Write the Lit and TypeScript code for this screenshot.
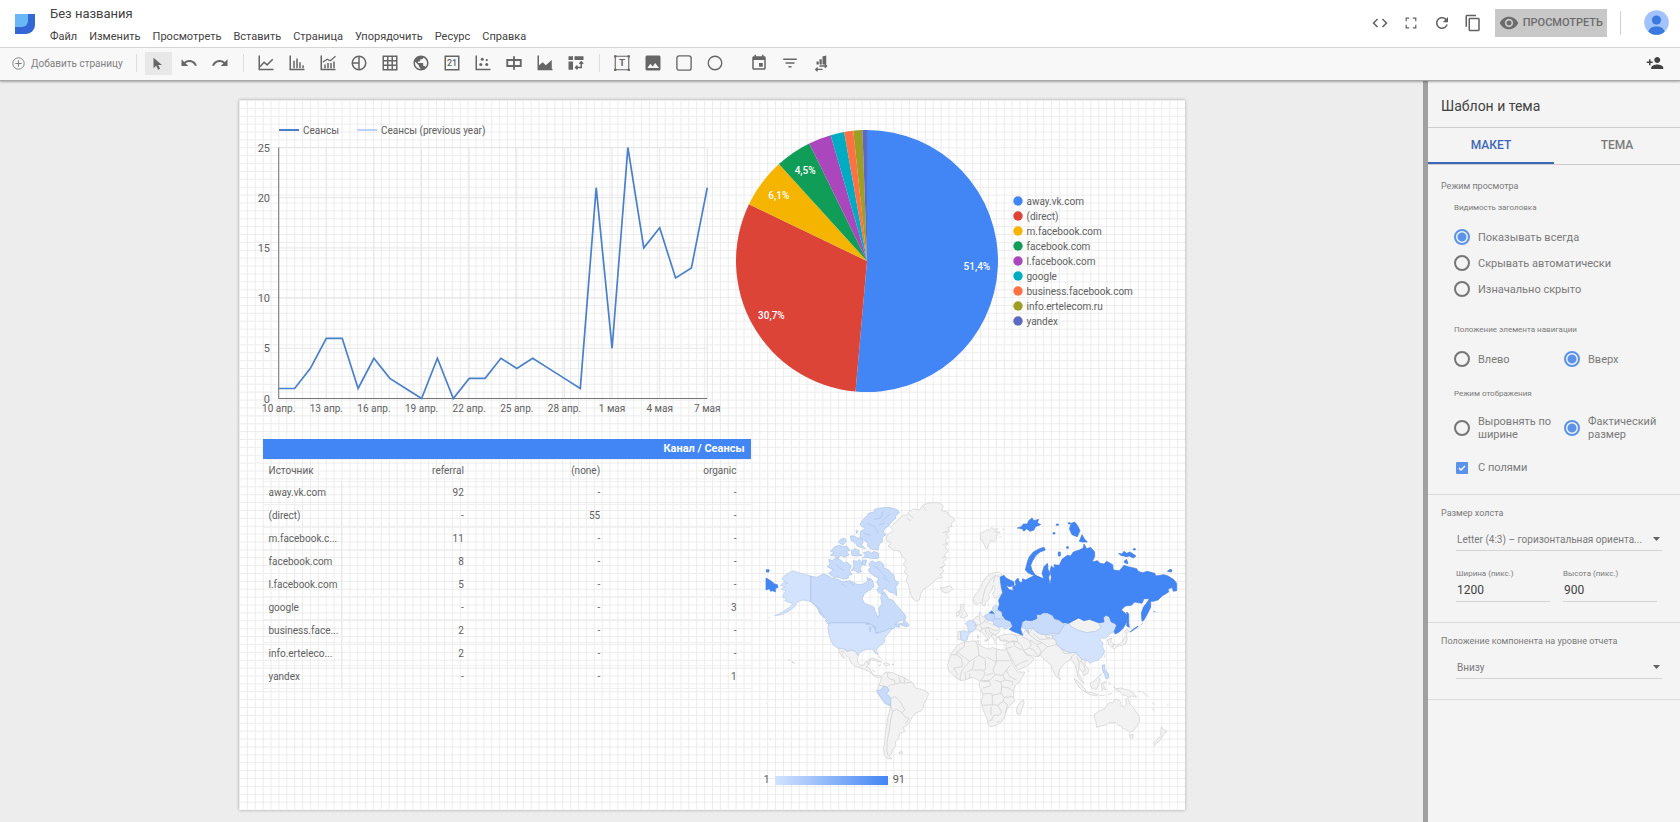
import { LitElement, html, svg, css } from "lit";
import { customElement, state } from "lit/decorators.js";
import { classMap } from "lit/directives/class-map.js";

/* ---------- data ---------- */

const SESSIONS = [1, 1, 3, 6, 6, 1, 4, 2, 1, 0, 4, 0, 2, 2, 4, 3, 4, 3, 2, 1, 21, 5, 25, 15, 17, 12, 13, 21];
const DAYS = ["10 апр.", "13 апр.", "16 апр.", "19 апр.", "22 апр.", "25 апр.", "28 апр.", "1 мая", "4 мая", "7 мая"];

const SOURCES = [
  { name: "away.vk.com", value: 92, color: "#4285f4" },
  { name: "(direct)", value: 55, color: "#db4437" },
  { name: "m.facebook.com", value: 11, color: "#f4b400" },
  { name: "facebook.com", value: 8, color: "#0f9d58" },
  { name: "l.facebook.com", value: 5, color: "#ab47bc" },
  { name: "google", value: 3, color: "#00acc1" },
  { name: "business.facebook.com", value: 2, color: "#ff7043" },
  { name: "info.ertelecom.ru", value: 2, color: "#9e9d24" },
  { name: "yandex", value: 1, color: "#5c6bc0" },
];

const ROWS = [
  ["away.vk.com", "92", "-", "-"],
  ["(direct)", "-", "55", "-"],
  ["m.facebook.c...", "11", "-", "-"],
  ["facebook.com", "8", "-", "-"],
  ["l.facebook.com", "5", "-", "-"],
  ["google", "-", "-", "3"],
  ["business.face...", "2", "-", "-"],
  ["info.erteleco...", "2", "-", "-"],
  ["yandex", "-", "-", "1"],
];

const MENU = ["Файл", "Изменить", "Просмотреть", "Вставить", "Страница", "Упорядочить", "Ресурс", "Справка"];

/* ---------- icons, all on a 24 unit box ---------- */

const solid = (d: string) => svg`<path fill="currentColor" d=${d} />`;
const line = (d: string) => svg`<path fill="none" stroke="currentColor" stroke-width="2" d=${d} />`;

const ICONS: Record<string, unknown> = {
  code: solid("M9.4 16.6L4.8 12l4.6-4.6L8 6l-6 6 6 6 1.4-1.4zm5.2 0l4.6-4.6-4.6-4.6L16 6l6 6-6 6-1.4-1.4z"),
  fullscreen: solid("M5 15H3v6h6v-2H5v-4zM3 9h2V5h4V3H3v6zm16 10h-4v2h6v-6h-2v4zM15 3v2h4v4h2V3h-6z"),
  refresh: solid("M17.65 6.35C16.2 4.9 14.21 4 12 4c-4.42 0-7.99 3.58-7.99 8s3.57 8 7.99 8c3.73 0 6.84-2.55 7.73-6h-2.08c-.82 2.33-3.04 4-5.65 4-3.31 0-6-2.69-6-6s2.69-6 6-6c1.66 0 3.14.69 4.22 1.78L13 11h7V4l-2.35 2.35z"),
  copy: solid("M16 1H4c-1.1 0-2 .9-2 2v14h2V3h12V1zm3 4H8c-1.1 0-2 .9-2 2v14c0 1.1.9 2 2 2h11c1.1 0 2-.9 2-2V7c0-1.1-.9-2-2-2zm0 16H8V7h11v14z"),
  eye: solid("M12 4.5C7 4.5 2.73 7.61 1 12c1.73 4.39 6 7.5 11 7.5s9.27-3.11 11-7.5c-1.73-4.39-6-7.5-11-7.5zM12 17c-2.76 0-5-2.24-5-5s2.24-5 5-5 5 2.24 5 5-2.24 5-5 5zm0-8c-1.66 0-3 1.34-3 3s1.34 3 3 3 3-1.34 3-3-1.34-3-3-3z"),
  share: solid("M15 12c2.21 0 4-1.79 4-4s-1.79-4-4-4-4 1.79-4 4 1.79 4 4 4zm-9-2V7H4v3H1v2h3v3h2v-3h3v-2H6zm9 4c-2.67 0-8 1.34-8 4v2h16v-2c0-2.66-5.33-4-8-4z"),
  undo: solid("M12.5 8c-2.65 0-5.05.99-6.9 2.6L2 7v9h9l-3.62-3.62c1.39-1.16 3.16-1.88 5.12-1.88 3.54 0 6.55 2.31 7.6 5.5l2.37-.78C21.08 11.03 17.15 8 12.5 8z"),
  redo: solid("M18.4 10.6C16.55 8.99 14.15 8 11.5 8c-4.65 0-8.58 3.03-9.96 7.22L3.9 16c1.05-3.19 4.05-5.5 7.6-5.5 1.95 0 3.73.72 5.12 1.88L13 16h9V7l-3.6 3.6z"),
  cursor: solid("M6 5v14l3.6-3.2 2.5 5.2 2.6-1.2-2.4-5h5z"),
  add: svg`<circle cx="12" cy="12" r="10.5" fill="none" stroke="currentColor" stroke-width="1.8" />${line("M12 6v12M6 12h12")}`,
  lineChart: line("M3 2v18.5h19M4 17l5.5-6 4 3.5L21 7"),
  barChart: svg`${line("M3 2v18.5h19")}${line("M8 9v10M12 6v13M16 11v8M20 15v4")}`,
  comboChart: svg`${line("M3 2v18.5h19")}${line("M8 14v5M12 12v7M16 12v7M20 10v9")}<path fill="none" stroke="currentColor" stroke-width="1.5" d="M5 11l6-4 4 2 7-6" />`,
  pie: svg`<circle cx="12" cy="12" r="9" fill="none" stroke="currentColor" stroke-width="2" />${line("M12 3v18M3 12h9")}`,
  table: line("M3 3h18v18H3zM3 9h18M3 15h18M9 3v18M15 3v18"),
  globe: solid("M12 2C6.48 2 2 6.48 2 12s4.48 10 10 10 10-4.48 10-10S17.52 2 12 2zm-1 17.93c-3.95-.49-7-3.85-7-7.93 0-.62.08-1.21.21-1.79L9 15v1c0 1.1.9 2 2 2v1.93zm6.9-2.54c-.26-.81-1-1.39-1.9-1.39h-1v-3c0-.55-.45-1-1-1H8v-2h2c.55 0 1-.45 1-1V7h2c1.1 0 2-.9 2-2v-.41c2.93 1.19 5 4.06 5 7.41 0 2.08-.8 3.97-2.1 5.39z"),
  score: svg`${line("M3 3h18v18H3z")}<text x="12" y="16.5" font-size="12" font-weight="500" text-anchor="middle" fill="currentColor">21</text>`,
  scatter: svg`${line("M3 2v18.5h19")}<circle cx="9" cy="14" r="2" fill="currentColor" /><circle cx="11" cy="7" r="2" fill="currentColor" /><circle cx="17" cy="14" r="2" fill="currentColor" /><circle cx="17" cy="8" r="1.5" fill="currentColor" />`,
  bullet: svg`<path fill="none" stroke="currentColor" stroke-width="2.5" d="M3 8h18v8H3zM12 3v18" />`,
  area: svg`${line("M3 2v18.5h19")}${solid("M4 20v-5l5-4 4 4 8-7v12z")}`,
  pivot: svg`${solid("M2 3h6v5H2zM10 3h12v5H10zM2 10h6v11H2z")}${line("M19 11v7h-7M16.5 13l2.5-2.5 2.5 2.5M14 15.5L11.5 18l2.5 2.5")}`,
  text: svg`<path fill="none" stroke="currentColor" stroke-width="1.5" d="M3 3h18v18H3z" />${solid("M1.5 1.5h3v3h-3zM19.5 1.5h3v3h-3zM1.5 19.5h3v3h-3zM19.5 19.5h3v3h-3z")}<text x="12" y="16.5" font-size="13" font-weight="700" text-anchor="middle" fill="currentColor">T</text>`,
  image: solid("M22 20V4c0-1.1-.9-2-2-2H4c-1.1 0-2 .9-2 2v16c0 1.1.9 2 2 2h16c1.1 0 2-.9 2-2zM8.5 13l3 3.5L15 12l5 6.5H4.5z"),
  rect: svg`<rect x="2.5" y="2.5" width="19" height="19" rx="3" fill="none" stroke="currentColor" stroke-width="1.8" />`,
  circle: svg`<circle cx="12" cy="12" r="9" fill="none" stroke="currentColor" stroke-width="1.8" />`,
  date: solid("M17 12h-5v5h5v-5zM16 1v2H8V1H6v2H5c-1.11 0-1.99.9-1.99 2L3 19c0 1.1.89 2 2 2h14c1.1 0 2-.9 2-2V5c0-1.1-.9-2-2-2h-1V1h-2zm3 18H5V8h14v11z"),
  filter: solid("M10 18h4v-2h-4v2zM3 6v2h18V6H3zm3 7h12v-2H6v2z"),
  dataControl: svg`${solid("M6 10h3v4H6zM10 7h3v7h-3zM14 3h1l4-1v12h-5z")}<path fill="none" stroke="currentColor" stroke-width="1.8" d="M10 16h9M17 13.5l2.5 2.5-2.5 2.5M14 20.5H5M7.5 18L5 20.5 7.5 23" />`,
};

const icon = (name: string) => html`<svg class="icon" viewBox="0 0 24 24" aria-hidden="true">${ICONS[name]}</svg>`;

const TOOLS: { name: string; label: string }[][] = [
  [
    { name: "cursor", label: "Выбрать" },
    { name: "undo", label: "Отменить" },
    { name: "redo", label: "Повторить" },
  ],
  [
    { name: "lineChart", label: "Временной ряд" },
    { name: "barChart", label: "Гистограмма" },
    { name: "comboChart", label: "Комбинированная диаграмма" },
    { name: "pie", label: "Круговая диаграмма" },
    { name: "table", label: "Таблица" },
    { name: "globe", label: "Географическая карта" },
    { name: "score", label: "Сводка" },
    { name: "scatter", label: "Точечная диаграмма" },
    { name: "bullet", label: "Маркированная диаграмма" },
    { name: "area", label: "Диаграмма с областями" },
    { name: "pivot", label: "Сводная таблица" },
  ],
  [
    { name: "text", label: "Текст" },
    { name: "image", label: "Изображение" },
    { name: "rect", label: "Прямоугольник" },
    { name: "circle", label: "Круг" },
  ],
  [
    { name: "date", label: "Диапазон дат" },
    { name: "filter", label: "Фильтр" },
    { name: "dataControl", label: "Управление данными" },
  ],
];

/* ---------- time series ---------- */

@customElement("line-chart")
class LineChart extends LitElement {
  static styles = css`
    :host { display: block; }
    .chart { display: block; width: 100%; height: auto; font-family: Roboto, sans-serif; }
    .axis { font-size: 10px; fill: #616161; }
    .value { font-size: 11px; fill: #616161; text-anchor: end; }
    .grid { stroke: #e6e6e6; stroke-width: 1; }
    .base { stroke: #757575; stroke-width: 1; }
    .series { fill: none; stroke: #4a80cb; stroke-width: 1.7; }
  `;

  render() {
    const left = 39.7, right = 468.3, top = 47.5, bottom = 298.5;
    const x = (i: number) => left + ((right - left) * i) / (SESSIONS.length - 1);
    const y = (v: number) => bottom - ((bottom - top) * v) / 25;
    const d = "M" + SESSIONS.map((v, i) => `${x(i).toFixed(1)},${y(v).toFixed(1)}`).join("L");
    return html`
      <svg class="chart" viewBox="0 0 488 328" role="img" aria-label="Сеансы по дням">
        <path d="M40 30h20" stroke="#4a80cb" stroke-width="2" />
        <text class="axis" x="64" y="34">Сеансы</text>
        <path d="M118 30h20" stroke="#b9d3f6" stroke-width="2" />
        <text class="axis" x="142" y="34">Сеансы (previous year)</text>
        ${[0, 5, 10, 15, 20, 25].map((v) => svg`
          <path class="grid" d="M${left} ${y(v)}H${right}" />
          <text class="value" x="31" y=${y(v) + 4}>${v}</text>`)}
        ${DAYS.map((day, i) => svg`
          <path class="grid" d="M${x(i * 3)} ${top}V${bottom}" />
          <text class="axis" text-anchor="middle" x=${x(i * 3)} y="312">${day}</text>`)}
        <path class="base" fill="none" d="M${left} ${top}V${bottom}H${right}" />
        <path class="series" d=${d} />
      </svg>`;
  }
}

/* ---------- pie ---------- */

@customElement("pie-chart")
class PieChart extends LitElement {
  static styles = css`
    :host { display: flex; align-items: center; gap: 14px; font-family: Roboto, sans-serif; }
    .pie { display: block; width: 264px; height: 264px; flex: none; }
    .share { font-size: 10px; font-weight: 500; fill: #fff; text-anchor: middle; }
    .legend { list-style: none; margin: 0; padding: 0; font-size: 10px; line-height: 15px; color: #616161; }
    .entry { display: flex; align-items: center; gap: 4px; white-space: nowrap; }
    .dot { width: 10px; height: 10px; }
  `;

  render() {
    const total = SOURCES.reduce((sum, s) => sum + s.value, 0);
    const point = (share: number, r: number) => {
      const a = share * 2 * Math.PI;
      return [132 + r * Math.sin(a), 132 - r * Math.cos(a)];
    };
    let start = 0;
    const slices = SOURCES.map((s) => {
      const share = s.value / total;
      const end = start + share;
      const [x1, y1] = point(start, 131);
      const [x2, y2] = point(end, 131);
      const [tx, ty] = point(start + share / 2, 110);
      start = end;
      const d = `M132 132L${x1} ${y1}A131 131 0 ${share > 0.5 ? 1 : 0} 1 ${x2} ${y2}Z`;
      const label = (share * 100).toFixed(1).replace(".", ",") + "%";
      return svg`<path d=${d} fill=${s.color} />
        ${share > 0.04 ? svg`<text class="share" x=${tx} y=${ty + 4}>${label}</text>` : ""}`;
    });
    return html`
      <svg class="pie" viewBox="0 0 264 264" role="img" aria-label="Сеансы по источникам">${slices}</svg>
      <ul class="legend">
        ${SOURCES.map((s) => html`<li class="entry">
          <svg class="dot" viewBox="0 0 10 10"><circle cx="5" cy="5" r="4.7" fill=${s.color} /></svg>${s.name}</li>`)}
      </ul>`;
  }
}

/* ---------- world map ---------- */

const AMERICA = {
  none: [
    "M412,134L430,122 422,112 438,96 450,84 460,74 470,76 476,66 492,56 508,60 520,44 544,38 566,38 580,48 574,62 592,66 598,78 610,82 614,92 604,100 606,110 594,112 598,124 588,132 596,142 586,150 594,162 586,172 594,184 584,194 590,206 580,216 586,226 574,232 582,244 570,252 578,262 560,266 548,278 534,290 520,298 512,312 508,330 498,334 488,326 480,306 476,288 468,272 474,256 462,246 470,234 460,222 468,210 456,198 450,184 430,180 414,168 424,160 408,150Z",
    "M572,292L582,294 590,290 602,288 608,296 600,304 588,310 576,304Z",
    "M264,474L280,476 292,484 304,480 316,484 324,498 322,512 330,526 340,526 348,514 360,512 356,524 348,530 358,534 362,540 366,550 374,556 386,556 394,560 388,562 378,562 368,554 360,546 346,540 334,534 318,530 304,520 298,506 288,496 280,484 274,484 284,506 276,500 268,486Z",
    "M356,508L370,504 386,512 396,517 382,514 366,510Z",
    "M400,520L412,519 420,524 408,528Z M386,526L392,525 390,528Z M426,522L432,523 428,525Z M384,498L390,502 396,508",
    "M394,560L402,550 414,546 428,548 444,556 462,562 478,572 490,580 496,594 514,598 530,604 536,612 528,630 522,640 520,654 512,664 498,668 488,680 480,694 470,706 460,712 464,724 448,732 446,746 436,756 438,768 428,778 424,792 416,798 426,806 412,806 404,796 400,776 404,756 406,730 410,706 414,680 420,656 422,648 404,640 392,622 380,606 384,592 388,582 392,572Z",
    "M446,788L456,784 458,790 450,792Z M114,508L122,512 M126,514L134,520 128,518Z M56,384L60,382 M46,642L50,640 M74,632h2 M60,748h3 M346,586h3",
  ],
  usa: [
    "M182,258L160,252 145,248 130,242 118,248 105,256 95,266 103,273 114,280 100,277 92,286 106,290 94,297 108,303 100,312 98,322 110,325 104,332 118,338 130,340 122,350 106,360 88,372 74,377 94,374 116,364 134,350 140,338 150,332 160,330 175,333 186,336 198,346 206,356 216,370 226,382 222,384 210,370 200,352 182,334Z",
    "M238,398L346,398 358,402 370,404 378,414 384,428 400,422 418,414 430,412 422,422 412,434 402,444 404,456 394,464 384,472 378,480 384,494 376,490 368,478 352,478 338,482 328,488 326,497 316,484 304,480 292,484 280,476 264,474 250,466 242,450 236,430 234,412Z",
  ],
  canada: [
    "M182,258L200,262 220,252 232,256 245,264 262,268 280,276 300,272 318,282 335,284 350,276 360,264 368,272 372,290 356,302 344,310 336,326 344,340 358,346 372,352 376,366 384,384 388,372 386,354 396,342 392,322 398,308 408,312 414,326 428,330 438,344 446,352 456,364 468,378 466,388 450,392 434,404 452,400 448,412 436,410 430,416 418,416 400,424 380,430 376,424 374,412 360,402 346,398 238,398 228,388 218,374 208,358 196,344 182,334Z",
    "M236,208L246,212 256,204 272,210 282,220 290,216 304,228 298,240 306,254 294,256 296,264 280,268 266,262 252,262 236,250 250,240 232,230 240,222Z",
    "M356,222L366,212 376,218 388,214 400,222 402,234 416,240 424,250 432,256 434,268 446,280 438,290 440,318 430,308 418,306 408,294 396,300 404,308 392,312 380,300 388,290 380,278 386,264 372,258 362,250 354,240 362,232Z",
    "M336,92L352,76 356,70 372,66 374,58 390,54 416,52 440,58 448,68 438,76 436,86 424,96 416,108 404,116 400,126 408,134 396,142 398,154 388,162 384,180 366,178 352,168 354,160 344,152 330,142 332,124 346,116 330,104Z",
    "M340,188L356,184 364,190 372,184 386,190 386,204 370,206 350,202 338,204 346,196Z",
    "M300,138L314,138 322,144 334,144 340,156 334,164 346,176 332,172 322,168 316,158 304,152Z M266,156L272,148 284,144 288,154 280,164 272,162Z M318,120L324,124 320,130Z",
    "M242,184L254,170 268,166 280,170 290,168 300,182 288,184 298,194 284,202 272,196 264,206 254,198 242,196 252,188Z",
    "M304,182L316,176 328,182 326,190 336,196 322,198 306,196Z M310,212L322,214 328,208 338,222 330,234 334,246 322,248 314,240 304,242 312,228Z M338,210L350,210 346,226 336,222Z M352,262L360,272 352,270Z",
    "M452,402L460,400 462,390 470,398 474,400 476,408 468,410 456,406Z M206,364L214,376 M226,390L238,402 234,402Z",
  ],
  peru: ["M380,602L392,600 402,588 412,592 418,602 408,612 418,618 422,626 422,648 404,638 392,622Z"],
  russia: ["M48,264L62,272 74,282 82,284 84,292 76,296 76,306 68,302 62,304 58,296 48,300Z M49,239h8v7h-8Z"],
  water: "M346,402L354,404 360,400 350,399Z M358,410L360,426 364,412Z M368,408L376,418 378,412Z M374,430L386,425 M300,276L312,286 M276,282L288,290 M400,62L392,84 372,88 M420,72L400,90 M352,100L374,110 384,130 M404,100L388,104 M340,130L362,136 M380,232L396,248 408,262 M400,262L420,276 M372,226L384,238 M258,222L270,236 282,240",
  border:
    "M388,586L402,588M414,548L412,560 422,568 432,570 436,582 418,586 412,592M436,582L452,578 446,560M452,578L466,580 484,576M462,562L464,578M422,626L436,620 448,632 456,644 464,660 456,668 440,658 428,664 422,648M456,668L464,680 478,686 466,700M428,664L422,690 418,720 412,750 410,780 414,798M350,516L358,524M366,540L376,546M476,72L490,84 M520,50L528,62 M470,84L482,92 M592,124L578,128 M592,160L580,164 M586,200L574,204 M582,230L568,234",
};

const EURASIA = {
  none: [
    "M60,130L74,124 80,118 86,122 96,112 100,118 114,116 104,126 120,126 108,136 110,148 100,156 92,150 86,164 80,178 74,168 68,152 62,150Z M116,142L124,140 M126,118h8 M86,206h3",
    "M40,330L44,316 54,304 62,292 68,276 78,262 90,252 104,248 118,246 126,254 122,264 122,290 128,308 118,320 104,324 98,312 106,298 100,286 94,302 86,314 88,326 78,334 74,348 68,346 62,336 50,344 42,340Z",
    "M326,400L340,392 356,384 372,392 388,388 404,394 416,398 424,412 408,424 380,428 356,422 336,412Z",
    "M116,438L132,434 150,432 172,436 186,436 196,420 206,432 218,414 230,426 256,434 280,436 286,448 290,464 280,470 262,470 256,482 244,490 236,500 218,498 204,494 190,482 184,466 172,456 160,452 148,456 136,450 122,452Z",
    "M138,460L160,454 172,456 184,466 192,484 200,496 212,498 222,506 212,520 196,530 174,540 166,528 158,510 148,492 138,476Z",
    "M240,494L252,480 262,470 280,466 290,464 304,476 318,484 334,488 350,486 346,498 334,502 330,510 318,516 306,530 298,540 294,564 286,556 278,540 270,522 262,516 254,508 246,502Z M298,562L302,568 298,570Z",
    "M334,500L346,490 356,498 366,508 380,512 374,522 386,538 384,550 372,556 366,544 358,534 354,548 362,562 372,580 364,576 354,562 350,540 344,522 336,512Z",
    "M342,566L354,574 366,588 378,600 376,606 366,600 356,590Z M376,606L396,608 414,614 410,618 390,614Z M390,580L402,574 412,562 422,568 416,582 410,598 396,596Z M424,580L438,574 430,584 438,600 430,596 426,602Z M418,616L436,616 M444,614L456,610 M446,574L450,584 M420,556L428,548",
    "M460,590L470,596 482,594 504,600 520,608 530,622 516,618 506,622 496,616 486,614 482,606 468,600Z M534,602L542,606 M546,606L558,614 566,620 M576,638L584,644 M576,656L582,660 M620,646L626,642",
    "M456,472L462,464 478,462 488,454 494,440 500,434 502,450 496,462 486,466 474,468 462,478Z M494,426L500,418 508,424 498,432Z M442,450L456,444 452,454 462,462 456,470 448,466Z M436,492L432,504",
    "M404,672L420,662 434,656 440,646 450,636 458,640 464,628 476,630 482,636 480,644 492,652 498,644 498,628 504,624 510,642 520,652 530,668 538,680 538,694 530,710 520,722 508,726 498,718 488,716 484,708 474,706 466,698 450,698 434,706 422,708 410,712 408,696 402,684Z M508,734L520,734 518,744 512,746Z",
    "M604,710L610,720 620,722 612,734 604,742 602,730Z M598,740L604,746 592,758 584,766 582,758 590,750Z M578,782h2 M556,804h2",
    "M202,542L208,544 M212,654L216,656",
  ],
  light: [
    "M304,420L314,404 326,400 336,412 356,422 380,428 408,424 424,412 416,400 430,394 430,380 438,374 448,380 454,396 470,404 466,422 450,432 440,442 430,446 424,442 420,450 430,460 426,468 434,484 426,500 414,510 396,516 390,520 382,512 366,508 356,498 350,486 334,488 318,484 304,476 290,464 290,454 278,444 276,436 292,434Z",
    "M102,372L112,360 124,364 130,378 120,386 104,384Z",
    "M98,352L108,344 116,352 116,360 104,364 98,360Z",
  ],
  mid: [
    "M186,398L196,390 214,392 230,386 230,372 250,368 262,368 278,376 288,390 304,394 314,404 306,414 298,430 272,432 256,434 242,432 230,426 218,414 206,418 206,430 198,418 186,412Z",
    "M74,376L88,370 102,372 104,386 98,394 80,390Z",
    "M98,394L104,386 120,386 136,386 152,394 156,406 144,412 136,418 128,410 116,412 102,404Z",
    "M426,526L434,524 434,538 446,552 446,564 438,566 434,554 428,542Z M424,552L418,560",
  ],
  russia: [
    "M120,262L132,256 138,264 150,270 162,276 162,286 150,290 138,286 146,298 160,302 158,290 168,286 166,272 174,264 178,276 186,278 188,266 196,270 212,262 226,256 246,264 252,266 246,250 252,230 262,220 264,238 270,250 266,262 270,284 274,262 270,242 274,228 284,236 282,224 298,226 306,208 322,196 332,198 340,186 358,180 370,174 372,162 380,176 392,172 404,186 404,200 396,216 412,212 420,220 432,222 440,214 448,218 458,224 460,240 478,242 492,226 504,230 512,232 530,236 534,244 548,248 562,244 584,250 588,258 612,254 624,258 640,268 650,280 650,302 640,304 636,292 624,298 626,306 606,318 594,330 580,334 572,334 572,352 562,372 552,390 546,394 544,370 550,352 562,336 568,326 552,326 546,340 524,336 514,346 496,348 484,360 496,370 504,380 500,396 490,414 478,426 466,432 462,426 470,406 464,400 454,396 448,380 438,376 430,382 432,396 416,398 404,394 388,388 372,392 356,384 340,392 326,400 308,398 298,390 284,386 278,376 262,368 250,368 240,374 230,372 230,386 214,392 196,390 186,396 184,408 182,418 188,436 174,430 158,424 148,418 158,408 152,394 136,388 128,378 126,366 114,358 118,344 116,330 128,308 124,290Z",
    "M196,240L202,216 208,200 220,186 238,176 252,172 256,180 240,186 228,196 218,212 212,226 216,240 226,256 240,264 220,256 204,248Z",
    "M172,114L184,110 190,102 202,102 206,92 216,84 222,92 236,88 232,98 242,104 226,110 222,120 210,124 200,116 192,124 186,116Z",
    "M328,116L334,100 344,96 352,106 360,122 352,140 336,134Z M358,154L366,134 374,148 382,156 366,156Z M325,98h6v4h-6Z M289,102h6v4h-6Z M279,128h6v4h-6Z M295,186h6v12h-6Z M320,170h5v5h-5Z",
    "M476,190L486,192 492,184 500,190 510,186 528,198 520,204 508,198 500,200 482,196Z M492,214L500,208 504,222 494,218Z M520,176h6v4h-6Z M622,244L630,238 636,240 634,246Z",
    "M500,366L506,372 506,398 508,412 500,408 502,388Z M510,426L522,416 534,408 532,412 520,420Z M544,404L548,400 M580,364L586,366",
    "M88,369L95,362 102,370Z M262,222L264,230",
  ],
  border:
    "M190,482L208,474 214,462 206,450 186,440M160,454L166,470 186,480M208,474L222,480 236,500M236,500L244,484 230,464 210,450M230,464L246,458 262,470M218,430L240,448 256,448 270,440M206,432L228,450 246,458M256,434L262,446 284,446M166,436L172,444 172,456M166,528L184,518 204,510M138,476L158,470M304,476L312,490 332,490M350,500L358,520 356,534M358,512L370,520 376,540 366,546M366,508L362,516M66,338L74,300 90,272 106,256M100,276L106,256 118,260",
};

const EUROPE_AFRICA = {
  none: [
    "M76,134L86,132 84,144 92,156 98,168 86,174 74,172 82,162 76,150Z M66,156L74,152 74,164 64,170Z",
    "M70,214L78,214 76,240 68,238Z",
    "M112,180L124,170 132,168 134,156 140,168 150,170 150,184 164,190 176,194 188,200 196,210 190,220 178,224 188,232 180,244 174,236 168,228 158,218 150,212 156,224 164,234 158,240 154,232 140,216 130,212 122,208 124,196 118,184Z M128,224L132,232 128,236Z M148,240L158,240 154,246Z M176,248L186,250",
    "M190,232L206,226 224,224 246,228 250,240 236,244 226,246 206,244 196,242Z",
    "M74,252L88,246 104,244 132,242 130,254 146,262 162,268 172,262 188,268 206,270 216,268 220,282 230,306 238,322 248,336 270,336 264,348 254,364 240,378 236,392 236,412 238,424 226,434 216,448 212,460 208,474 196,488 184,496 166,500 160,494 156,476 148,458 142,440 138,424 144,408 140,394 132,380 134,364 126,358 112,352 96,358 80,362 66,356 52,344 40,330 38,314 44,296 48,280 60,266 66,256Z",
    "M264,418L268,428 262,444 256,462 246,462 244,450 250,434Z M4,236l6,4M70,34h2M78,94h2",
  ],
  light: ["M92,190L104,180 118,186 124,198 118,212 110,216 100,214 98,200Z", "M76,216L84,212 106,218 98,228 98,238 88,244 78,240Z"],
  border:
    "M66,276L88,260 88,246M48,284H64L66,272M62,284L80,294 82,320 56,324M66,276L104,304 92,318 82,330M104,304L132,286 128,256 122,244M132,286L150,296 152,324 146,336M184,268V306L152,290M184,302H224M184,306L174,330 180,344 204,346 214,330 226,316M118,300L112,328 96,336M112,330L146,330M150,336L146,350 136,362M174,340L152,346M180,344L166,360 140,364M204,346L210,360 198,366 180,360M214,330L224,350 244,360M198,366L200,380 198,400 172,406 168,400 144,402M200,380L220,384 236,394M210,360L232,364 232,376M198,400L208,412 236,410M172,406L172,434 142,436M172,434L188,436 204,424 208,412M188,436L200,456 192,466 176,466 170,480 160,484M168,440V466M204,424L218,434 210,460M82,330L76,344 76,362M92,358L90,336M104,356L104,340M56,324L66,340 64,354M136,362L164,364 166,378 144,384M184,488l8,-4M116,196L134,194 150,184M134,194L140,206 160,202 176,210 190,212M140,206L136,214M160,202L164,216 178,224M134,170L136,190M150,210L160,202M168,228L176,222",
};

@customElement("geo-map")
class GeoMap extends LitElement {
  static styles = css`
    :host { display: block; font-family: Roboto, sans-serif; }
    .map { display: block; width: 100%; height: auto; }
    .none { fill: #f2f2f2; stroke: #cfcfcf; stroke-width: 2; }
    .light { fill: #d3e3fd; stroke: #b4c8e6; stroke-width: 2; }
    .mid { fill: #c8dbfb; stroke: #a9c2e8; stroke-width: 2; }
    .russia { fill: #4285f4; stroke: #3f7ce2; stroke-width: 2; }
    .water { fill: none; stroke: #a9c2e8; stroke-width: 2; }
    .border { fill: none; stroke: #cacaca; stroke-width: 2; }
    .scale { display: flex; align-items: center; gap: 5px; padding: 10px 0 0 13px; font-size: 11px; line-height: 10px; color: #616161; }
    .ramp { width: 113px; height: 9px; background: linear-gradient(to right, #d3e3fd, #4285f4); }
  `;

  private shapes(kind: string, paths: string[]) {
    return paths.map((d) => svg`<path class=${kind} stroke-linejoin="round" d=${d} />`);
  }

  render() {
    return html`
      <svg class="map" viewBox="3 0 1302 825" role="img" aria-label="Сеансы по странам">
        <g>
          ${this.shapes("none", AMERICA.none)}${this.shapes("light", AMERICA.usa)}
          ${this.shapes("mid", [...AMERICA.canada, ...AMERICA.peru])}${this.shapes("russia", AMERICA.russia)}
          <path class="water" d=${AMERICA.water} />
          <path class="border" d=${AMERICA.border} />
        </g>
        <g transform="translate(555 210)">
          ${this.shapes("none", EUROPE_AFRICA.none)}${this.shapes("light", EUROPE_AFRICA.light)}
          <path class="border" d=${EUROPE_AFRICA.border} />
        </g>
        <g transform="translate(630 0)">
          ${this.shapes("none", EURASIA.none)}${this.shapes("light", EURASIA.light)}
          ${this.shapes("mid", EURASIA.mid)}${this.shapes("russia", EURASIA.russia)}
          <path class="border" d=${EURASIA.border} />
        </g>
      </svg>
      <div class="scale"><span>1</span><span class="ramp"></span><span>91</span></div>`;
  }
}

/* ---------- application ---------- */

@customElement("app-root")
class AppRoot extends LitElement {
  @state() private tool = "cursor";

  static styles = css`
    :host { display: flex; flex-direction: column; height: 100vh; overflow: hidden; background: #ededed; font-family: Roboto, sans-serif; color: #424242; }
    * { box-sizing: border-box; }
    button { border: 0; padding: 0; background: none; font: inherit; color: inherit; cursor: pointer; }
    .icon { display: block; width: 18px; height: 18px; }

    .header { display: flex; align-items: center; height: 48px; flex: none; padding: 0 11px 0 14px; background: #fff; border-bottom: 1px solid #dadada; }
    .logo { width: 22px; height: 22px; flex: none; }
    .heading { flex: 1; margin-left: 14px; padding-top: 2px; }
    .title { margin: 0; font-size: 13px; line-height: 18px; font-weight: 400; }
    .menu { display: flex; gap: 12px; margin-top: 6px; font-size: 11px; line-height: 16px; }
    .actions { display: flex; align-items: center; gap: 13px; padding-bottom: 2px; color: #616161; }
    .view { display: flex; align-items: center; gap: 4px; height: 28px; padding: 0 4px; background: #c8c8c8; color: #6b6b6b; font-size: 11px; font-weight: 500; }
    .view .icon { width: 20px; height: 20px; }
    .rule { width: 1px; height: 24px; background: #d0d0d0; }
    .avatar { width: 25px; height: 25px; margin-left: 10px; }

    .toolbar { display: flex; align-items: center; height: 33px; flex: none; padding: 0 16px 2px 12px; background: #f8f8f8; border-bottom: 1px solid #a8a8a8; box-shadow: 0 1px 2px #0000004d; color: #666; z-index: 1; }
    .add { display: flex; align-items: center; gap: 6px; font-size: 10px; color: #808080; }
    .add .icon { width: 13px; height: 13px; }
    .group { display: flex; gap: 4px; }
    .tool { display: flex; align-items: center; justify-content: center; width: 27px; height: 23px; }
    .tool.on { background: #e8e8e8; }
    .split { width: 1px; height: 18px; margin: 0 9px; background: #dcdcdc; }
    .split.wide { margin: 0 8px 0 13px; }
    .space { width: 17px; }
    .share { margin-left: auto; color: #424242; }

    .body { display: flex; flex: 1; min-height: 0; }
    .stage { flex: 1; min-width: 0; padding: 19px 0 13px; display: flex; justify-content: center; align-items: flex-start; }
    .canvas { position: relative; width: 946px; max-width: 100%; aspect-ratio: 4 / 3; background: #fff; box-shadow: 0 0 3px #0000004d; }
    .mesh { position: absolute; inset: 0; width: 100%; height: 100%; }
    .sheet { position: relative; display: flex; flex-direction: column; }
    .band { display: grid; align-items: start; }
    .upper { grid-template-columns: 488fr 458fr; }
    .lower { grid-template-columns: 512fr 434fr; }
    .pie { padding: 29px 0 0 8px; }
    .geo { padding-top: 62px; }

    .data { width: calc(100% - 24px); margin: 11px 0 0 24px; border-collapse: collapse; table-layout: fixed; font-size: 10px; color: #616161; }
    .data th, .data td { height: 23px; padding: 0 14px 0 6px; text-align: right; font-weight: 400; border-bottom: 1px solid #f0f0f0; white-space: nowrap; }
    .data .head th { height: 22px; }
    .data .banner { height: 20px; padding-right: 6px; background: #4285f4; color: #fff; font-size: 11px; font-weight: 700; }
    .data .name { text-align: left; padding-right: 0; }
    .data tbody .name { border-right: 1px solid #e8e8e8; }
    .first { width: 79px; }

    .panel { width: 257px; flex: none; border-left: 5px solid #a0a0a0; background: #f4f4f4; color: #7a7a7a; font-size: 11px; line-height: 13px; }
    .caption { margin: 0; padding: 16px 13px 12px; font-size: 14px; line-height: 18px; font-weight: 400; color: #424242; border-bottom: 1px solid #cdcdcd; }
    .tabs { display: flex; border-bottom: 1px solid #cdcdcd; }
    .tab { flex: 1; height: 36px; font-size: 12px; font-weight: 500; border-bottom: 2px solid transparent; }
    .tab.on { color: #3d66b8; border-color: #3d66b8; }
    .section { padding: 12px 16px 20px 13px; border-bottom: 1px solid #dadada; }
    .section.view-mode { padding-top: 15px; }
    .label { display: block; font-size: 9px; line-height: 12px; }
    .inner { margin: 0; padding: 0 0 0 13px; border: 0; min-width: 0; }
    .label + .inner { margin-top: 10px; }
    .inner legend { padding: 0; font-size: 8px; line-height: 12px; }
    .stack { display: flex; flex-direction: column; gap: 10px; padding: 15px 0 27px; }
    .pair { display: grid; grid-template-columns: 110px 1fr; align-items: center; padding: 15px 0 21px; }
    .pair.tall { padding: 15px 0 18px; }
    .option { display: flex; align-items: center; gap: 8px; min-height: 16px; }
    .radio { appearance: none; flex: none; width: 16px; height: 16px; margin: 0; border: 2px solid #757575; border-radius: 50%; }
    .radio:checked { border-color: #5b93ea; background: radial-gradient(circle, #5b93ea 0 4px, transparent 5px); }
    .check { position: relative; display: flex; align-items: center; gap: 10px; padding: 2px 0 0 2px; }
    .box { appearance: none; width: 12px; height: 12px; margin: 0; border-radius: 1px; background: #5b93ea; }
    .tick { position: absolute; left: 4px; top: 5px; width: 8px; height: 8px; pointer-events: none; }
    .drop { position: relative; margin: 10px 2px 0 15px; }
    .select { appearance: none; display: block; width: 100%; height: 22px; padding: 0 12px 0 1px; border: 0; border-bottom: 1px solid #d4d4d4; border-radius: 0; background: none; font: inherit; font-size: 10px; color: inherit; }
    .arrow { position: absolute; right: 2px; top: 8px; width: 7px; height: 4px; pointer-events: none; }
    .sizes { display: grid; grid-template-columns: 94px 94px; gap: 13px; padding: 17px 0 0 15px; }
    .sizes .label { font-size: 8px; }
    .input { display: block; width: 100%; height: 22px; padding: 0 1px 2px; border: 0; border-bottom: 1px solid #d4d4d4; background: none; font: inherit; font-size: 12px; color: #424242; }
  `;

  private radio(group: string, text: unknown, checked = false) {
    return html`<label class="option"><input class="radio" type="radio" name=${group} .checked=${checked} /><span>${text}</span></label>`;
  }

  private select(id: string, text: string) {
    return html`<div class="drop">
      <select class="select" id=${id}><option>${text}</option></select>
      <svg class="arrow" viewBox="0 0 7 4"><path d="M0 0h7L3.5 4z" fill="#616161" /></svg>
    </div>`;
  }

  private tools(group: { name: string; label: string }[]) {
    return html`<div class="group">
      ${group.map((t) => html`<button
        class=${classMap({ tool: true, on: t.name === this.tool })}
        aria-label=${t.label}
        @click=${() => (this.tool = t.name)}>${icon(t.name)}</button>`)}
    </div>`;
  }

  render() {
    return html`
      <header class="header">
        <svg class="logo" viewBox="0 0 22 22">
          <path d="M1 1h20v11a9 9 0 0 1-9 9H1z" fill="#3367d6" />
          <path d="M1 1h13v7a6 6 0 0 1-6 6H1z" fill="#6ab7f8" />
        </svg>
        <div class="heading">
          <h1 class="title">Без названия</h1>
          <nav class="menu">${MENU.map((m) => html`<button>${m}</button>`)}</nav>
        </div>
        <div class="actions">
          <button aria-label="Код">${icon("code")}</button>
          <button aria-label="Во весь экран"><svg class="icon" viewBox="-3 -3 30 30" aria-hidden="true">${ICONS.fullscreen}</svg></button>
          <button aria-label="Обновить">${icon("refresh")}</button>
          <button aria-label="Копировать">${icon("copy")}</button>
          <button class="view">${icon("eye")}ПРОСМОТРЕТЬ</button>
          <span class="rule"></span>
          <svg class="avatar" viewBox="0 0 25 25">
            <clipPath id="disc"><circle cx="12.5" cy="12.5" r="12.3" /></clipPath>
            <g clip-path="url(#disc)">
              <path d="M0 0h25v25H0z" fill="#a1c2fa" />
              <circle cx="12.5" cy="10" r="4.6" fill="#3b78e0" />
              <path d="M4 25c0-6 3-8.5 8.5-8.5S21 19 21 25z" fill="#3b78e0" />
            </g>
          </svg>
        </div>
      </header>

      <div class="toolbar">
        <button class="add">${icon("add")}Добавить страницу</button>
        <span class="split wide"></span>
        ${this.tools(TOOLS[0])}
        <span class="split"></span>
        ${this.tools(TOOLS[1])}
        <span class="split"></span>
        ${this.tools(TOOLS[2])}
        <span class="space"></span>
        ${this.tools(TOOLS[3])}
        <button class="share" aria-label="Поделиться">${icon("share")}</button>
      </div>

      <div class="body">
        <main class="stage">
          <div class="canvas">
            <svg class="mesh" viewBox="0 0 1200 900" aria-hidden="true">
              <pattern id="mesh" width="10" height="10" patternUnits="userSpaceOnUse">
                <path d="M10 0H0V10" fill="none" stroke="#e7e7e7" stroke-width="2" />
              </pattern>
              <rect width="1200" height="900" fill="url(#mesh)" />
            </svg>
            <div class="sheet">
              <div class="band upper">
                <line-chart></line-chart>
                <pie-chart class="pie"></pie-chart>
              </div>
              <div class="band lower">
                <table class="data">
                  <colgroup><col class="first" /><col /><col /><col /></colgroup>
                  <thead>
                    <tr><th class="banner" colspan="4">Канал / Сеансы</th></tr>
                    <tr class="head"><th class="name">Источник</th><th>referral</th><th>(none)</th><th>organic</th></tr>
                  </thead>
                  <tbody>
                    ${ROWS.map(([name, ...cells]) => html`<tr><td class="name">${name}</td>${cells.map((c) => html`<td>${c}</td>`)}</tr>`)}
                  </tbody>
                </table>
                <geo-map class="geo"></geo-map>
              </div>
            </div>
          </div>
        </main>

        <aside class="panel">
          <h2 class="caption">Шаблон и тема</h2>
          <div class="tabs" role="tablist">
            <button class="tab on" role="tab" aria-selected="true">МАКЕТ</button>
            <button class="tab" role="tab" aria-selected="false">ТЕМА</button>
          </div>
          <section class="section view-mode">
            <span class="label">Режим просмотра</span>
            <fieldset class="inner">
              <legend>Видимость заголовка</legend>
              <div class="stack">
                ${this.radio("head", "Показывать всегда", true)}
                ${this.radio("head", "Скрывать автоматически")}
                ${this.radio("head", "Изначально скрыто")}
              </div>
            </fieldset>
            <fieldset class="inner">
              <legend>Положение элемента навигации</legend>
              <div class="pair">${this.radio("nav", "Влево")}${this.radio("nav", "Вверх", true)}</div>
            </fieldset>
            <fieldset class="inner">
              <legend>Режим отображения</legend>
              <div class="pair tall">
                ${this.radio("fit", html`Выровнять по<br />ширине`)}${this.radio("fit", html`Фактический<br />размер`, true)}
              </div>
              <label class="check">
                <input class="box" type="checkbox" .checked=${true} />
                <svg class="tick" viewBox="0 0 8 8"><path d="M1 4l2 2 4-4" fill="none" stroke="#fff" stroke-width="1.3" /></svg>
                С полями
              </label>
            </fieldset>
          </section>
          <section class="section">
            <label class="label" for="format">Размер холста</label>
            ${this.select("format", "Letter (4:3) – горизонтальная ориента...")}
            <div class="sizes">
              <label><span class="label">Ширина (пикс.)</span><input class="input" value="1200" /></label>
              <label><span class="label">Высота (пикс.)</span><input class="input" value="900" /></label>
            </div>
          </section>
          <section class="section">
            <label class="label" for="level">Положение компонента на уровне отчета</label>
            ${this.select("level", "Внизу")}
          </section>
        </aside>
      </div>`;
  }
}
